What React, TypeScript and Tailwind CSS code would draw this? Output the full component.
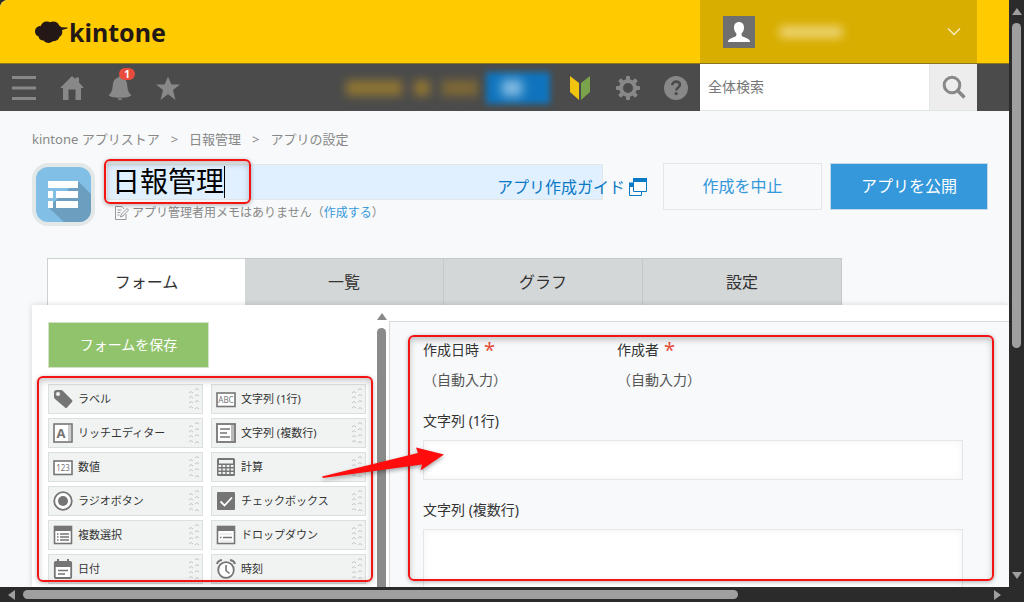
import type { ReactNode } from 'react';

const PALETTE: { label: string; icon: ReactNode }[] = [
  { label: 'ラベル', icon: <TagIcon /> },
  { label: '文字列 (1行)', icon: <BoxedText text="ABC" /> },
  { label: 'リッチエディター', icon: <RichTextIcon /> },
  { label: '文字列 (複数行)', icon: <MultiLineIcon /> },
  { label: '数値', icon: <BoxedText text="123" /> },
  { label: '計算', icon: <CalcIcon /> },
  { label: 'ラジオボタン', icon: <RadioIcon /> },
  { label: 'チェックボックス', icon: <CheckIcon /> },
  { label: '複数選択', icon: <MultiSelectIcon /> },
  { label: 'ドロップダウン', icon: <DropDownIcon /> },
  { label: '日付', icon: <DateIcon /> },
  { label: '時刻', icon: <ClockIcon /> },
];

const TABS = ['フォーム', '一覧', 'グラフ', '設定'];

export default function App() {
  return (
    <div className="flex h-screen flex-col overflow-hidden bg-[#2b2b2b] font-['Noto_Sans','Noto_Sans_CJK_JP',sans-serif] text-[#333]">
      <div className="flex min-h-0 flex-1">
        <div className="flex min-w-0 flex-1 flex-col overflow-hidden rounded-tl-lg bg-[#f7f9fa]">
          <Header />
          <GlobalNav />
          <Breadcrumb />
          <AppTitle />
          <Tabs />
          <main className="flex min-h-0 flex-1 pl-8">
            <div className="flex min-w-0 flex-1 bg-white shadow-[0_0_6px_rgba(0,0,0,0.15)]">
              <FieldPalette />
              <FormCanvas />
            </div>
          </main>
        </div>
        <VerticalScrollbar />
      </div>
      <HorizontalScrollbar />
    </div>
  );
}

function Header() {
  return (
    <header className="flex h-16 shrink-0 justify-between border-b border-[#8a7420] bg-[#ffcb00] pr-8">
      <a href="#" className="flex items-center gap-px pl-[34px] text-[#231815]">
        <svg viewBox="0 0 34 24" className="h-6 w-[34px]" fill="currentColor">
          <path d="M1 11.500C1 8.300 3.500 5.800 6.800 6 7.500 3 10.500 1 13.500 1.500c1 0 1.800.3 2.500.7 3-1.500 8-.8 9.300 3.500.8.200 1.500.8 2 1.600l6 .1c.5.300.4.900-.1 1.100l-5.200 1.600c1 3.500-.6 6-2.600 7-.6 3.200-3.500 4.300-6.200 4-2 2.300-7.500 2.800-9.600-.6-2.800 0-4.800-1.500-5-4C2.500 16 1 14 1 11.500z" />
        </svg>
        <span className="text-[25px] leading-8 font-bold">kintone</span>
      </a>
      <button type="button" aria-label="ユーザーメニュー" className="flex w-[277px] items-center bg-[#d8ae00] pr-4 pl-[23px]">
        <svg viewBox="0 0 32 32" className="size-8 bg-[#6f6f6f]">
          <path
            d="M16 6c3.200 0 5 2.300 5 5.500 0 2.600-1 4.700-2.400 5.900-.3 2 .2 2.800 2.200 3.500 3.600 1.300 6 2.300 6.400 5.100H4.800c.4-2.800 2.800-3.800 6.400-5.100 2-.7 2.500-1.500 2.200-3.500C12 16.200 11 14.100 11 11.500 11 8.300 12.800 6 16 6z"
            fill="#fff"
          />
        </svg>
        <span className="ml-6 h-3 w-16 rounded bg-[#f1dc8c]/80 blur-[5px]" />
        <svg viewBox="0 0 14 10" className="ml-auto h-[10px] w-[14px]" fill="none" stroke="#f7edc4" strokeWidth="1.500">
          <path d="M1 1.500l6 6 6-6" />
        </svg>
      </button>
    </header>
  );
}

function NavButton({ label, children }: { label: string; children: ReactNode }) {
  return (
    <button type="button" aria-label={label} className="relative flex w-12 items-center justify-center text-[#888]">
      {children}
    </button>
  );
}

function GlobalNav() {
  return (
    <nav className="flex h-[47px] shrink-0 bg-[#4b4b4b] pr-8">
      <NavButton label="メニュー">
        <svg viewBox="0 0 24 24" className="size-6" fill="currentColor">
          <path d="M0 0h24v3H0zM0 10.500h24v3H0zM0 21h24v3H0z" />
        </svg>
      </NavButton>
      <NavButton label="ポータル">
        <svg viewBox="0 0 24 24" className="size-6" fill="currentColor">
          <path d="M12 0l3.500 3.200V1.500H19v5l4.500 5V12H21v12h-5.500V13.500h-7V24H3V12H.500v-.5z" />
        </svg>
      </NavButton>
      <NavButton label="通知">
        <svg viewBox="0 0 24 24" className="size-6" fill="currentColor">
          <path d="M12 0c1 0 1.500.8 1.500 1.600C17.500 2.500 19 5.500 19.300 10c.3 4.500 1.500 7 4 9.300-1 1.700-5.500 2.500-11.300 2.500S1.700 21 .7 19.300c2.500-2.300 3.700-4.800 4-9.300.3-4.500 1.800-7.500 5.800-8.400C10.500.8 11 0 12 0zM9.500 22.500h5c-.5 1-1.500 1.500-2.500 1.500s-2-.5-2.500-1.500z" />
        </svg>
        <span className="absolute top-1 left-[23px] flex h-3 w-4 items-center justify-center rounded-full bg-[#e74c3c] text-[10px] leading-3 font-bold text-white">
          1
        </span>
      </NavButton>
      <NavButton label="ブックマーク">
        <svg viewBox="0 0 24 24" className="size-6" fill="currentColor">
          <path d="M12 .500l3.300 8H24l-7 5.400L19.500 24 12 18.300 4.500 24 7 13.900 0 8.500h8.700z" />
        </svg>
      </NavButton>

      <div className="mr-[6px] ml-auto flex items-center gap-2">
        <span className="flex gap-3 blur-[5px]">
          <span className="h-4 w-14 bg-[#8d7433]" />
          <span className="h-4 w-4 bg-[#8d7433]" />
          <span className="h-4 w-9 bg-[#7d6937]" />
        </span>
        <button type="button" aria-label="購入" className="flex h-8 w-16 items-center bg-[#0f74bd] px-4 blur-[3px]">
          <span className="h-4 w-5 bg-[#8cc0e6] blur-[4px]" />
        </button>
      </div>

      <NavButton label="はじめての方へ">
        <svg viewBox="0 0 24 24" className="size-6">
          <path d="M2 0l9 7v17l-9-8z" fill="#f1c40f" />
          <path d="M22 0l-9 7v17l9-8z" fill="#7ba34b" />
        </svg>
      </NavButton>
      <NavButton label="設定">
        <svg viewBox="0 0 24 24" className="size-6">
          <g fill="currentColor">
            {[0, 45, 90, 135].map((deg) => (
              <rect key={deg} x="10" y="0" width="4" height="24" rx="1" transform={`rotate(${deg} 12 12)`} />
            ))}
            <circle cx="12" cy="12" r="9" />
          </g>
          <circle cx="12" cy="12" r="5" fill="#4b4b4b" />
        </svg>
      </NavButton>
      <NavButton label="ヘルプ">
        <svg viewBox="0 0 24 24" className="size-6" fill="none">
          <circle cx="12" cy="12" r="12" fill="currentColor" />
          <path d="M8.300 9.300c0-2.300 1.600-3.700 3.800-3.700 2.300 0 3.800 1.300 3.800 3.200 0 2.600-3.600 2.700-3.600 5.700" stroke="#4b4b4b" strokeWidth="2.600" />
          <circle cx="12.200" cy="17.600" r="1.700" fill="#4b4b4b" />
        </svg>
      </NavButton>

      <form className="flex w-[277px] border-b border-[#dfe4e4] bg-white">
        <input
          type="text"
          aria-label="全体検索"
          placeholder="全体検索"
          className="min-w-0 flex-1 px-2 text-sm placeholder:text-[#777] focus:outline-none"
        />
        <button type="submit" aria-label="検索" className="flex w-12 items-center justify-center border-l border-[#e3e7e8] bg-[#ededed]">
          <svg viewBox="0 0 24 24" className="size-6" fill="none" stroke="#888">
            <circle cx="10" cy="10" r="7.800" strokeWidth="3" />
            <path d="M15.500 15.500l7 7" strokeWidth="3.500" />
          </svg>
        </button>
      </form>
    </nav>
  );
}

function Breadcrumb() {
  return (
    <nav className="flex shrink-0 gap-[11px] px-8 pt-[18px] text-[13px] leading-5 text-[#888]">
      <a href="#">kintone アプリストア</a>
      <span>&gt;</span>
      <a href="#">日報管理</a>
      <span>&gt;</span>
      <a href="#">アプリの設定</a>
    </nav>
  );
}

function AppTitle() {
  return (
    <section className="flex shrink-0 items-start pt-[14px] pr-[21px] pl-8">
      <AppIcon />
      <div className="relative ml-3 min-w-0 flex-1 pt-px">
        <input
          type="text"
          aria-label="アプリ名"
          defaultValue="日報管理"
          className="block h-9 w-[496px] border border-[#e3e7e8] bg-[#e0f0ff] px-1 pb-1 text-[28px] leading-8 text-black focus:outline-none"
        />
        <span className="absolute top-[3px] left-[117px] h-8 w-px bg-black" />
        <Highlight className="-top-1 -left-[3px] h-[45px] w-[147px]" />
        <a
          href="#"
          className="absolute top-3 left-[390px] flex items-center gap-1 text-base leading-6 whitespace-nowrap text-[#0b79c4]"
        >
          アプリ作成ガイド
          <svg viewBox="0 0 18 18" className="size-[18px]" fill="none" stroke="currentColor">
            <path d="M4 5.500H.500v12h12V14" />
            <path d="M0 4.500h4V9H0z" fill="currentColor" stroke="none" />
            <path d="M4.500.500h13v13h-13z" fill="#fff" />
            <path d="M4 0h14v4H4z" fill="currentColor" stroke="none" />
          </svg>
        </a>
        <p className="flex items-center pt-[3px] pl-2 text-xs leading-5 whitespace-nowrap text-[#888]">
          <svg viewBox="0 0 14 14" className="mr-[3px] size-[14px]" fill="none" stroke="#999">
            <path d="M11 8v5.500H.500V.500H7L9 3" />
            <path d="M2.500 4h4M2.500 6.500h3M2.500 9h2M5.500 11l1-3 5.500-5.500 1.500 1.500L8 10z" />
          </svg>
          アプリ管理者用メモはありません（
          <a href="#" className="text-[#3498db]">
            作成する
          </a>
          ）
        </p>
      </div>
      <div className="flex gap-2">
        <button type="button" className="h-[47px] w-[159px] border border-[#e3e7e8] bg-[#f7f9fa] pb-[2px] text-base text-[#3498db]">
          作成を中止
        </button>
        <button type="button" className="h-[47px] w-[158px] border border-[#c3d9e8] bg-[#3498db] pb-[2px] text-base text-white">
          アプリを公開
        </button>
      </div>
    </section>
  );
}

function AppIcon() {
  return (
    <svg viewBox="0 0 63 63" className="size-[63px] shrink-0">
      <rect width="63" height="63" rx="16" fill="#e2e7e8" />
      <rect x="4" y="4" width="55" height="55" rx="12" fill="#82bfe7" />
      <path d="M46 18l13 13v16a12 12 0 0 1-12 12H32L16 44z" fill="#6c9ebf" />
      <path d="M16 18h30v7H16zM16 28h5v7h-5zM24 28h22v7H24zM16 38h5v7h-5zM24 38h22v7H24z" fill="#fff" />
    </svg>
  );
}

function Tabs() {
  return (
    <div role="tablist" className="flex shrink-0 pt-[32px] pl-[47px]">
      {TABS.map((tab, i) => (
        <button
          key={tab}
          type="button"
          role="tab"
          aria-selected={i === 0}
          className={
            i === 0
              ? 'h-[47px] w-[198px] border-t border-l border-[#ccd1d2] bg-white text-base'
              : 'h-[47px] w-[199px] border-t border-r border-[#c3c8c9] bg-[#d4d7d7] text-base'
          }
        >
          {tab}
        </button>
      ))}
    </div>
  );
}

function FieldPalette() {
  return (
    <section className="flex shrink-0">
      <div className="w-[343px] pt-[17px] pl-4">
        <button type="button" className="h-[46px] w-[161px] border border-[#d3e2c9] bg-[#91c36c] text-sm text-white">
          フォームを保存
        </button>
        <div className="relative mt-4 pr-2">
          <ul className="flex flex-wrap gap-x-2 gap-y-1">
            {PALETTE.map((field) => (
              <li
                key={field.label}
                className="flex h-[30px] w-[155px] items-center border border-[#dadfdf] bg-[#f1f3f3] pr-[2px] pl-1 text-[11px]"
              >
                {field.icon}
                <span className="ml-[5px] flex-1 whitespace-nowrap">{field.label}</span>
                <DragHandle />
              </li>
            ))}
          </ul>
          <Highlight className="-top-[8px] -left-[11px] bottom-[2px] w-[336px]" />
          <Arrow />
        </div>
      </div>
      <div className="flex w-[13px] flex-col items-center gap-2 pt-2">
        <svg viewBox="0 0 10 7" className="h-[7px] w-[10px] shrink-0" fill="#8a8a8a">
          <path d="M5 0l5 7H0z" />
        </svg>
        <div className="w-[9px] flex-1 rounded-t-full bg-[#8a8a8a]" />
      </div>
    </section>
  );
}

function FormCanvas() {
  return (
    <section className="relative mt-4 ml-px min-w-0 flex-1 overflow-hidden border-t border-l border-[#d5d9da] bg-[#f7f9fa] pt-[18px] pr-[46px] pl-[33px] text-sm leading-5">
      <div className="flex">
        <AutoField label="作成日時" />
        <AutoField label="作成者" />
      </div>
      <label htmlFor="single" className="mt-[21px] block">
        文字列 (1行)
      </label>
      <input
        id="single"
        type="text"
        className="mt-[9px] block h-10 w-full border border-[#e3e7e8] bg-white shadow-[inset_0_0_8px_rgba(0,0,0,0.05)] focus:outline-none"
      />
      <label htmlFor="multi" className="mt-5 block">
        文字列 (複数行)
      </label>
      <textarea
        id="multi"
        className="mt-[9px] block h-32 w-full resize-none border border-[#e3e7e8] bg-white shadow-[inset_0_0_8px_rgba(0,0,0,0.05)] focus:outline-none"
      />
      <Highlight className="top-[13px] right-[15px] bottom-[6px] left-[18px]" />
    </section>
  );
}

function AutoField({ label }: { label: string }) {
  return (
    <div className="w-[194px]">
      <div className="flex h-5 gap-[5px]">
        {label}
        <span className="text-xl leading-5 text-[#e74c3c]">*</span>
      </div>
      <div className="mt-[10px] text-[#555]">（自動入力）</div>
    </div>
  );
}

/* Red frame laid over the part being explained */
function Highlight({ className }: { className: string }) {
  return (
    <span
      className={`pointer-events-none absolute rounded-md border-2 border-[#f51414] shadow-[0_1px_4px_rgba(0,0,0,0.3),inset_0_3px_6px_rgba(0,0,0,0.22)] ${className}`}
    />
  );
}

function Arrow() {
  return (
    <svg
      viewBox="0 0 124 32"
      className="pointer-events-none absolute top-[62px] left-[273px] z-10 h-8 w-[124px] drop-shadow-[0_2px_2px_rgba(0,0,0,0.35)]"
    >
      <path d="M1 30.500L97 7 95 1.500 123 8.500 99.500 24.500 101 18.500 2 32z" fill="#ff0d0d" />
    </svg>
  );
}

function DragHandle() {
  return (
    <svg viewBox="0 0 12 24" className="h-6 w-3" fill="none" stroke="#c3c6c6" strokeWidth="1">
      {[6, 11, 16, 21].map((y) => (
        <path key={y} d={`M1 ${y}q2-3 4 0`} />
      ))}
      {[3, 9, 15, 22].map((y) => (
        <path key={y} d={`M7 ${y}q2-3 4 0`} />
      ))}
    </svg>
  );
}

/* Palette icons */

function Icon({ children }: { children: ReactNode }) {
  return (
    <svg viewBox="0 0 20 20" className="size-5 shrink-0" fill="none" stroke="#757575">
      {children}
    </svg>
  );
}

function TagIcon() {
  return (
    <Icon>
      <path d="M1 3.500Q1 1 3.500 1H8q1 0 2 1l9 9q1 1 0 2l-5 5.500q-1 1-2 0L2 10Q1 9 1 8z" fill="#757575" stroke="none" />
      <circle cx="5" cy="5" r="1.800" fill="#f1f3f3" stroke="#d8d8d8" />
    </Icon>
  );
}

function BoxedText({ text }: { text: string }) {
  return (
    <Icon>
      <rect x="1" y="4" width="18" height="13.500" strokeWidth="1.600" fill="#fff" />
      <text x="10" y="14" textAnchor="middle" fontSize="8" fill="#757575" stroke="none">
        {text}
      </text>
    </Icon>
  );
}

function RichTextIcon() {
  return (
    <Icon>
      <rect x="1" y="1" width="18" height="18" strokeWidth="1.600" fill="#fff" />
      <path d="M15 2h3v16h-3z" fill="#ccc" stroke="none" />
      <text x="8" y="15" textAnchor="middle" fontSize="13" fontWeight="700" fill="#757575" stroke="none">
        A
      </text>
    </Icon>
  );
}

function MultiLineIcon() {
  return (
    <Icon>
      <rect x="1" y="1" width="18" height="18" strokeWidth="1.800" fill="#fff" />
      <path d="M15 2h3v16h-3z" fill="#bbb" stroke="none" />
      <path d="M4 6h10M4 10h7M4 14h10" strokeWidth="1.600" />
    </Icon>
  );
}

function CalcIcon() {
  return (
    <Icon>
      <rect x="1" y="1" width="18" height="18" rx="1.500" fill="#757575" stroke="none" />
      <path d="M3 3h14v3.500H3z" fill="#f1f3f3" stroke="none" />
      {[9, 12.500, 16].map((y) => (
        <path key={y} d={`M2.500 ${y}h2.700M6.600 ${y}h2.700M10.700 ${y}h2.700M14.800 ${y}h2.700`} stroke="#f1f3f3" strokeWidth="2.200" />
      ))}
    </Icon>
  );
}

function RadioIcon() {
  return (
    <Icon>
      <circle cx="10" cy="10" r="8.800" strokeWidth="1.800" fill="#fff" />
      <circle cx="10" cy="10" r="5" fill="#757575" stroke="none" />
    </Icon>
  );
}

function CheckIcon() {
  return (
    <Icon>
      <rect x="1" y="1" width="18" height="18" rx="1" fill="#757575" stroke="none" />
      <path d="M4.500 10.500l4 4 7.500-8" stroke="#fff" strokeWidth="1.800" />
    </Icon>
  );
}

function MultiSelectIcon() {
  return (
    <Icon>
      <rect x="1.500" y="1.500" width="17" height="17" strokeWidth="1.600" fill="#fff" />
      <path d="M1 1h18v5H1z" fill="#757575" stroke="none" />
      <path d="M4 9h1.500M7 9h9M4 12h1.500M7 12h9M4 15h1.500M7 15h9" strokeWidth="1.300" />
    </Icon>
  );
}

function DropDownIcon() {
  return (
    <Icon>
      <rect x="1.500" y="1.500" width="17" height="17" strokeWidth="1.600" fill="#fff" />
      <path d="M1 1h18v5H1z" fill="#757575" stroke="none" />
      <path d="M4 12.500h1.500M7 12.500h9" strokeWidth="1.500" />
      <path d="M4 9h12M4 16h12" stroke="#ddd" />
    </Icon>
  );
}

function DateIcon() {
  return (
    <Icon>
      <rect x="1.800" y="3" width="16.400" height="16" rx="1" strokeWidth="1.800" fill="#fff" />
      <path d="M1 3h18v5H1zM4 0h2v4H4zM14 0h2v4h-2z" fill="#757575" stroke="none" />
      <path d="M5 11.500h10M5 15h7" strokeWidth="1.500" />
    </Icon>
  );
}

function ClockIcon() {
  return (
    <Icon>
      <circle cx="10" cy="11" r="7.800" strokeWidth="1.800" fill="#fff" />
      <path d="M10 6v5.500l3.500 3" strokeWidth="1.600" />
      <path d="M1 5q1-3.500 5-4M19 5q-1-3.500-5-4" strokeWidth="2" />
    </Icon>
  );
}

function VerticalScrollbar() {
  return (
    <div className="flex w-[15px] shrink-0 flex-col items-center pt-2 pb-2">
      <svg viewBox="0 0 10 7" className="h-[7px] w-[10px]" fill="#9f9f9f">
        <path d="M5 0l5 7H0z" />
      </svg>
      <div className="mt-2 h-[57%] w-[9px] rounded-full bg-[#9f9f9f]" />
      <svg viewBox="0 0 10 7" className="mt-auto h-[7px] w-[10px]" fill="#9f9f9f">
        <path d="M0 0h10L5 7z" />
      </svg>
    </div>
  );
}

function HorizontalScrollbar() {
  return (
    <div className="flex h-[15px] shrink-0 items-center pr-[23px] pl-2">
      <svg viewBox="0 0 7 10" className="h-[10px] w-[7px]" fill="#9f9f9f">
        <path d="M7 0v10L0 5z" />
      </svg>
      <div className="ml-2 h-[9px] w-[72%] rounded-full bg-[#9f9f9f]" />
      <svg viewBox="0 0 7 10" className="ml-auto h-[10px] w-[7px]" fill="#9f9f9f">
        <path d="M0 0l7 5-7 5z" />
      </svg>
    </div>
  );
}
